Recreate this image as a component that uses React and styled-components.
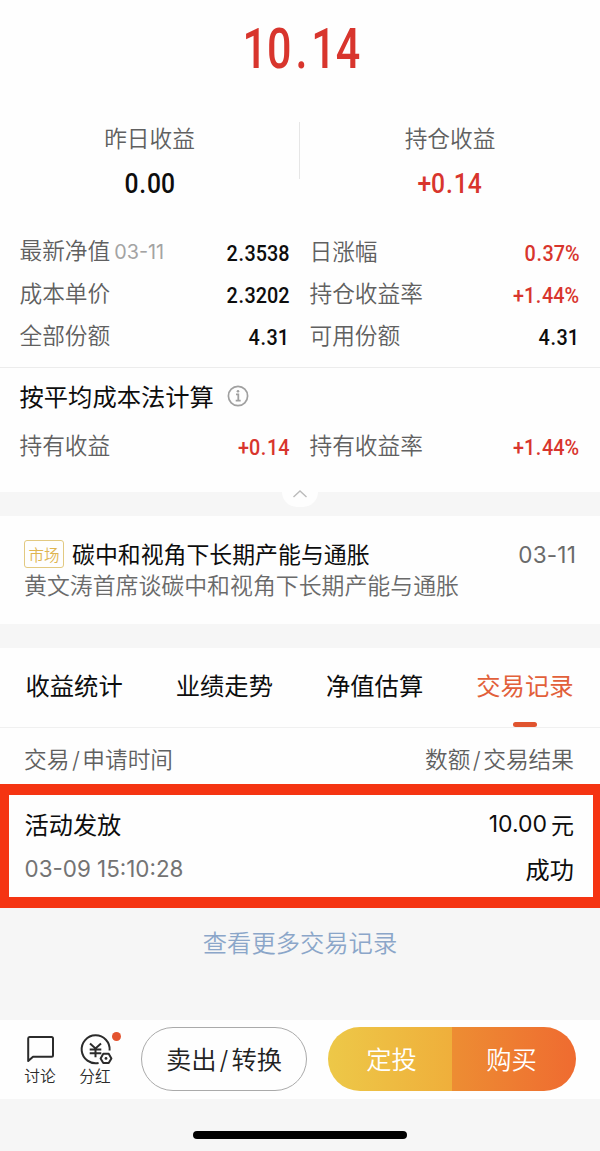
import React from 'react';
import styled, { createGlobalStyle } from 'styled-components';

const GlobalStyle = createGlobalStyle`
  * {
    box-sizing: border-box;
  }

  body {
    margin: 0;
    background: #f6f6f6;
    color: #0d0d0d;
    font-family: 'Inter', 'Noto Sans CJK SC', sans-serif;
    font-weight: 400;
  }
`;

const Page = styled.main`
  display: flex;
  flex-direction: column;
  width: 600px;
  height: 1151px;
  overflow: hidden;
  white-space: nowrap;
`;

const Panel = styled.section`
  display: flex;
  flex-direction: column;
  flex: none;
  height: ${(props) => props.$height}px;
  background: #fefefe;
`;

const Figure = styled.span`
  display: inline-block;
  font-family: 'Roboto', sans-serif;
  font-size: ${(props) => props.$size || 22.5}px;
  font-weight: 500;
  line-height: 1;
  color: ${(props) => (props.$up ? '#d8352d' : '#0d0d0d')};
  transform: scaleX(${(props) => props.$stretch || 0.88});
  transform-origin: ${(props) => props.$origin || 'right'} center;
`;

const Point = styled.span`
  margin: 0 ${(props) => props.$space}px;
`;

const Total = styled.div`
  display: flex;
  justify-content: center;
  align-items: center;
  height: 96px;
  padding: 1px 0 0 3px;
`;

const Earnings = styled.div`
  display: grid;
  grid-template-columns: 299px 301px;
  height: 134px;
  padding-top: 26px;
`;

const Earning = styled.div`
  display: flex;
  flex-direction: column;
  align-items: center;
  gap: 14px;
  height: 57px;
  border-left: ${(props) => (props.$divided ? '1px solid #e6e6e6' : 'none')};
`;

const Label = styled.span`
  font-size: 22.7px;
  font-weight: 350;
  line-height: 34px;
  color: #606060;
`;

const Slash = styled.span`
  margin: 0 ${(props) => props.$space || 2.5}px;
`;

const Details = styled.div`
  display: grid;
  grid-template-columns: 270px 270px;
  grid-auto-rows: 42px;
  column-gap: 20px;
  height: ${(props) => props.$height}px;
  padding: 0 20px 0 19.5px;
`;

const Detail = styled.div`
  display: flex;
  justify-content: space-between;
  align-items: center;
  padding-top: 1px;

  ${Figure} {
    margin-top: 3px;
  }
`;

const LabelDate = styled.small`
  margin-left: 4px;
  font-size: 19.8px;
  font-weight: 400;
  color: #a3a3a3;
`;

const MethodTitle = styled.h2`
  display: flex;
  align-items: center;
  gap: 13px;
  height: 57px;
  margin: 0;
  padding: 0 20px 1px 19.5px;
  border-top: 1px solid #ececec;
  font-size: 24.3px;
  font-weight: 400;
`;

const Divider = styled.div`
  display: flex;
  justify-content: center;
  flex: none;
  height: 24px;
  background: #f6f6f6;
`;

const Collapse = styled.button`
  display: flex;
  justify-content: center;
  width: 36px;
  height: 15px;
  padding: 0;
  border: 0;
  border-radius: 0 0 18px 18px;
  background: #fefefe;

  svg {
    margin-top: -2px;
  }
`;

const News = styled.article`
  display: flex;
  flex-direction: column;
  padding: 22px 24px 0;
`;

const NewsHead = styled.div`
  display: flex;
  align-items: center;
  height: 32px;
`;

const Tag = styled.span`
  display: flex;
  justify-content: center;
  align-items: center;
  width: 40px;
  height: 28px;
  margin-right: 8px;
  border: 1px solid #e2c981;
  border-radius: 3px;
  font-size: 15.5px;
  font-weight: 350;
  color: #dfb550;
`;

const NewsTitle = styled.h3`
  flex: 1;
  margin: -2px 0 0;
  font-size: 22.9px;
  font-weight: 400;
`;

const NewsDate = styled.time`
  font-size: 22.5px;
  font-weight: 400;
  letter-spacing: 0.2px;
  color: #6a6a6a;
`;

const NewsText = styled.p`
  margin: 0;
  font-size: 22.9px;
  font-weight: 350;
  line-height: 33px;
  color: #6a6a6a;
`;

const Tabs = styled.nav`
  display: flex;
  justify-content: space-between;
  height: 80px;
  padding: 0 26.500px 0 25.500px;
  border-bottom: 1px solid #f0f0f0;
`;

const Tab = styled.button`
  display: flex;
  flex-direction: column;
  align-items: center;
  justify-content: space-between;
  padding: 20px 0 0;
  border: 0;
  background: none;
  font: inherit;
  font-size: 24.3px;
  line-height: 36px;
  color: ${(props) => (props.$active ? '#e2603a' : '#0d0d0d')};

  &::after {
    content: '';
    width: 24px;
    height: 5px;
    border-radius: 3px;
    background: ${(props) => (props.$active ? '#e0542f' : 'transparent')};
  }
`;

const RecordHead = styled.div`
  display: flex;
  justify-content: space-between;
  height: 56px;
  padding: 15px 26px 0 24px;
`;

const Record = styled.div`
  display: grid;
  flex: none;
  grid-template-columns: 1fr auto;
  grid-template-rows: 45px 45px;
  align-items: center;
  height: 124px;
  padding: 6px 19px 0 15.500px;
  border: solid #f53412;
  border-width: 11px 7px 11px 9px;
  background: #fefefe;
  font-size: 24.2px;
`;

const Amount = styled.span`
  display: flex;
  align-items: center;
  gap: 4px;
  font-size: 23px;
`;

const Time = styled.time`
  font-size: 22.4px;
  font-weight: 400;
  color: #737373;
`;

const Result = styled.span`
  text-align: right;
`;

const More = styled.a`
  flex: none;
  height: 112px;
  padding-top: 17px;
  font-size: 24.3px;
  font-weight: 350;
  line-height: 36px;
  text-align: center;
  color: #8ba6c9;
`;

const ActionBar = styled.footer`
  display: flex;
  flex: none;
  height: 79px;
  padding: 7px 24px 8px;
  background: #fefefe;
`;

const IconAction = styled.button`
  position: relative;
  display: flex;
  flex-direction: column;
  align-items: center;
  width: 32px;
  margin-right: ${(props) => props.$gap}px;
  padding: 6px 0 0;
  border: 0;
  background: none;
  font: inherit;
  font-size: 15.7px;
  font-weight: 350;
  line-height: 22px;
  color: #2b2b2b;

  svg {
    flex: none;
    margin-bottom: 1px;
    overflow: visible;
  }
`;

const Dot = styled.i`
  position: absolute;
  top: 5px;
  left: 33px;
  width: 9px;
  height: 9px;
  border-radius: 50%;
  background: #e3532f;
`;

const Sell = styled.button`
  width: 166px;
  height: 64px;
  margin-right: 21px;
  padding: 0 0 2px;
  border: 1px solid #aaa;
  border-radius: 32px;
  background: none;
  font: inherit;
  font-size: 25.3px;
  font-weight: 350;
  color: #222;
`;

const BuyGroup = styled.div`
  display: flex;
  width: 248px;
  height: 64px;
  overflow: hidden;
  border-radius: 32px;
`;

const Buy = styled.button`
  width: 124px;
  padding: 0 ${(props) => (props.$plan ? 0 : 5)}px 2px ${(props) => (props.$plan ? 3 : 0)}px;
  border: 0;
  background: linear-gradient(90deg, ${(props) => (props.$plan ? '#edc848, #efaf3b' : '#ed8d33, #ef6b30')});
  font: inherit;
  font-size: 25.3px;
  font-weight: 350;
  color: #fff;
`;

const HomeIndicator = styled.div`
  width: 214px;
  height: 8px;
  margin: 32px auto 0;
  border-radius: 4px;
  background: #000;
`;

const InfoIcon = () => (
  <svg width="22" height="22" viewBox="0 0 22 22" fill="none" stroke="#a0a0a0">
    <circle cx="11" cy="11" r="9.6" strokeWidth="1.7" />
    <path d="M9 9.3h2.300v6.200M8.700 15.700h5" strokeWidth="1.8" />
    <circle cx="11" cy="6.2" r="1.3" fill="#a0a0a0" stroke="none" />
  </svg>
);

const ChevronIcon = () => (
  <svg width="16" height="8" viewBox="0 0 16 8" fill="none">
    <path d="M1.5 7 8 1l6.5 6" stroke="#bbb" strokeWidth="1.4" />
  </svg>
);

const ChatIcon = () => (
  <svg width="32" height="32" viewBox="0 0 32 32" fill="none" stroke="#2b2b2b" strokeWidth="2" strokeLinejoin="round">
    <path d="M5.500 4h22q1.500 0 1.500 1.500v16.700q0 1.500-1.500 1.500H9L4.200 28V5.500Q4.200 4 5.500 4z" />
  </svg>
);

const DividendIcon = () => (
  <svg width="32" height="32" viewBox="0 0 32 32" fill="none" stroke="#2b2b2b" strokeWidth="2">
    <path d="M19.600 30A14 14 0 1 1 30.600 17.500" />
    <path d="m11 10.500 5.500 5 5.500-5M10.700 16.500h11.600M10.700 20.300h11.600M16.500 15.500v8.700" />
    <path d="M24.300 20.800h5.400l2.700 4.600-2.700 4.600h-5.400l-2.700-4.600z" strokeLinejoin="round" />
    <circle cx="27" cy="25.400" r="1.400" fill="#2b2b2b" stroke="none" />
  </svg>
);

const details = [
  { label: '最新净值', date: '03-11', value: '2.3538' },
  { label: '日涨幅', value: '0.37%', up: true },
  { label: '成本单价', value: '2.3202' },
  { label: '持仓收益率', value: '+1.44%', up: true },
  { label: '全部份额', value: '4.31' },
  { label: '可用份额', value: '4.31' },
];

const averageCost = [
  { label: '持有收益', value: '+0.14', up: true },
  { label: '持有收益率', value: '+1.44%', up: true },
];

const tabs = ['收益统计', '业绩走势', '净值估算', '交易记录'];

const DetailList = ({ items, height }) => (
  <Details $height={height}>
    {items.map((item) => (
      <Detail key={item.label}>
        <Label>
          {item.label}
          {item.date && <LabelDate>{item.date}</LabelDate>}
        </Label>
        <Figure $up={item.up}>
          {item.value.split('.')[0]}
          <Point $space={0.7}>.</Point>
          {item.value.split('.')[1]}
        </Figure>
      </Detail>
    ))}
  </Details>
);

const App = () => (
  <>
    <GlobalStyle />
    <Page>
      <Panel $height={492}>
        <Total>
          <Figure $up $size={56} $stretch={0.77} $origin="center">10<Point $space={5}>.</Point>14</Figure>
        </Total>
        <Earnings>
          <Earning>
            <Label>昨日收益</Label>
            <Figure $size={28} $stretch={0.88} $origin="center">0<Point $space={1}>.</Point>00</Figure>
          </Earning>
          <Earning $divided>
            <Label>持仓收益</Label>
            <Figure $up $size={28} $stretch={0.88} $origin="center">+0<Point $space={1}>.</Point>14</Figure>
          </Earning>
        </Earnings>
        <DetailList items={details} height={137} />
        <MethodTitle>
          按平均成本法计算
          <InfoIcon />
        </MethodTitle>
        <DetailList items={averageCost} height={68} />
      </Panel>
      <Divider>
        <Collapse>
          <ChevronIcon />
        </Collapse>
      </Divider>
      <Panel $height={108}>
        <News>
          <NewsHead>
            <Tag>市场</Tag>
            <NewsTitle>碳中和视角下长期产能与通胀</NewsTitle>
            <NewsDate>03-11</NewsDate>
          </NewsHead>
          <NewsText>黄文涛首席谈碳中和视角下长期产能与通胀</NewsText>
        </News>
      </Panel>
      <Divider />
      <Panel $height={136}>
        <Tabs>
          {tabs.map((tab, index) => (
            <Tab key={tab} $active={index === 3}>{tab}</Tab>
          ))}
        </Tabs>
        <RecordHead>
          <Label>交易<Slash>/</Slash>申请时间</Label>
          <Label>数额<Slash>/</Slash>交易结果</Label>
        </RecordHead>
      </Panel>
      <Record>
        <span>活动发放</span>
        <Amount>10.00<span>元</span></Amount>
        <Time>03-09 15:10:28</Time>
        <Result>成功</Result>
      </Record>
      <More>查看更多交易记录</More>
      <ActionBar>
        <IconAction $gap={23}>
          <ChatIcon />
          讨论
        </IconAction>
        <IconAction $gap={30}>
          <DividendIcon />
          <Dot />
          分红
        </IconAction>
        <Sell>卖出<Slash $space={3}>/</Slash>转换</Sell>
        <BuyGroup>
          <Buy $plan>定投</Buy>
          <Buy>购买</Buy>
        </BuyGroup>
      </ActionBar>
      <HomeIndicator />
    </Page>
  </>
);

export default App;
